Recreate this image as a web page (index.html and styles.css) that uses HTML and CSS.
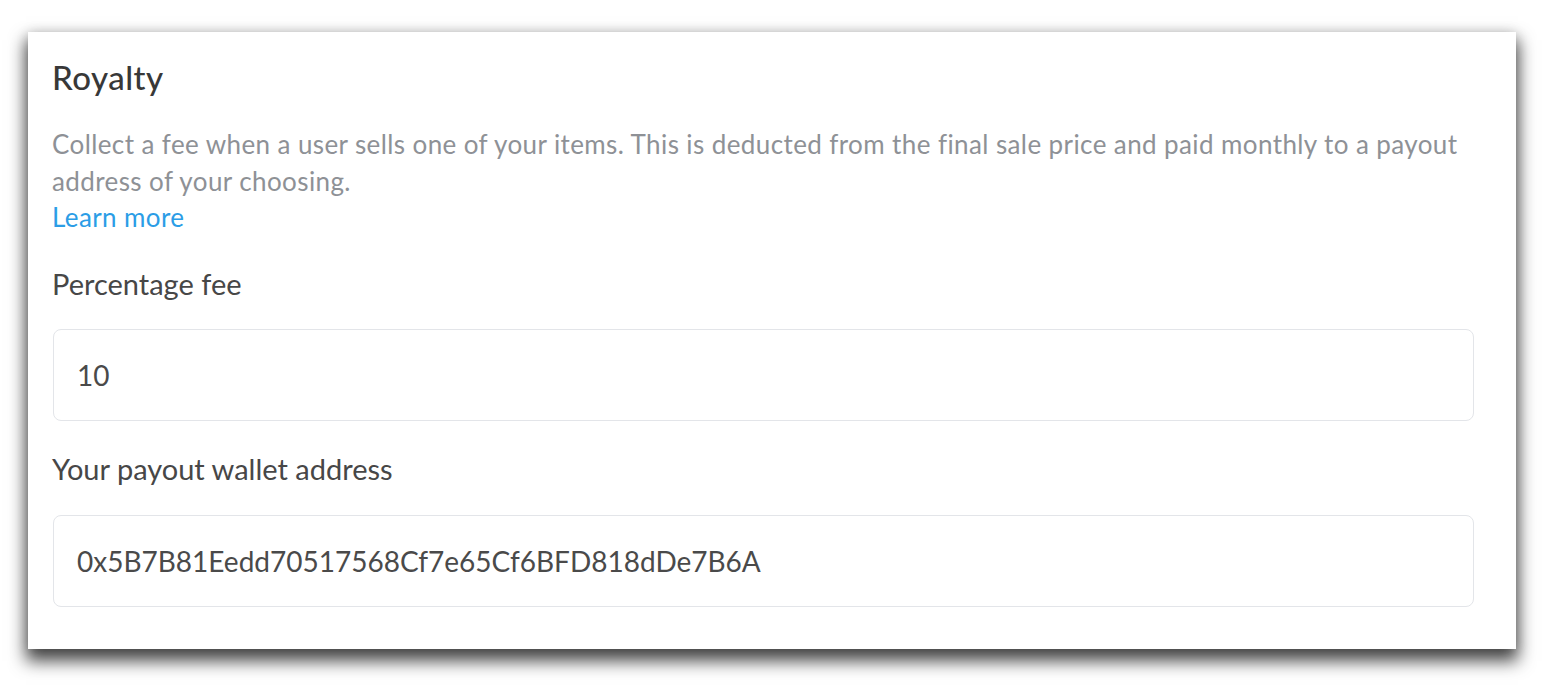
FILE: index.html
```html
<!DOCTYPE html>
<html lang="en">
<head>
<meta charset="utf-8">
<title>Royalty</title>
<link rel="stylesheet" href="styles.css">
</head>
<body>
<section class="card">
  <h2 class="title">Royalty</h2>
  <p class="desc">Collect a fee when a user sells one of your items. This is deducted from the final sale price and paid monthly to a payout address of your choosing.</p>
  <a class="link" href="#">Learn more</a>
  <div class="field">
    <label class="label">Percentage fee</label>
    <div class="input">10</div>
  </div>
  <div class="field">
    <label class="label">Your payout wallet address</label>
    <div class="input">0x5B7B81Eedd70517568Cf7e65Cf6BFD818dDe7B6A</div>
  </div>
</section>
</body>
</html>
```
FILE: styles.css
```css
html, body {
  margin: 0;
  background: #ffffff;
}
body {
  padding: 32px 40px 37px 28px;
  font-family: Lato, "Noto Sans", sans-serif;
}
.card {
  width: 1488px;
  height: 617px;
  box-sizing: border-box;
  background: #ffffff;
  padding: 20px 42px 0 24px;
  box-shadow: 0 10px 16px 2px rgba(0, 0, 0, 0.72), 0 0 12px rgba(0, 0, 0, 0.12);
}
.title {
  margin: 0;
  font-size: 33px;
  line-height: 40px;
  font-weight: 500;
  letter-spacing: 0.5px;
  color: #383838;
  height: 40px;
  padding-top: 5px;
}
.desc {
  margin: 29px 0 0;
  font-size: 26px;
  letter-spacing: 0.4px;
  line-height: 37px;
  color: #8e9196;
}
.link {
  display: block;
  font-size: 26px;
  letter-spacing: 0.4px;
  line-height: 35px;
  color: #2b9de6;
  text-decoration: none;
  width: max-content;
}
.field {
  display: flex;
  flex-direction: column;
}
.label {
  display: block;
  font-size: 29px;
  line-height: 40px;
  color: #474747;
  margin-top: 29px;
  margin-bottom: 25px;
}
.field + .field .label {
  margin-top: 28px;
  margin-bottom: 26px;
}
.input {
  height: 92px;
  box-sizing: border-box;
  border: 1.5px solid #e3e5e9;
  border-radius: 8px;
  padding: 0 23px;
  display: flex;
  align-items: center;
  font-size: 28px;
  color: #4a4a4a;
  margin-left: 1px;
}
```
